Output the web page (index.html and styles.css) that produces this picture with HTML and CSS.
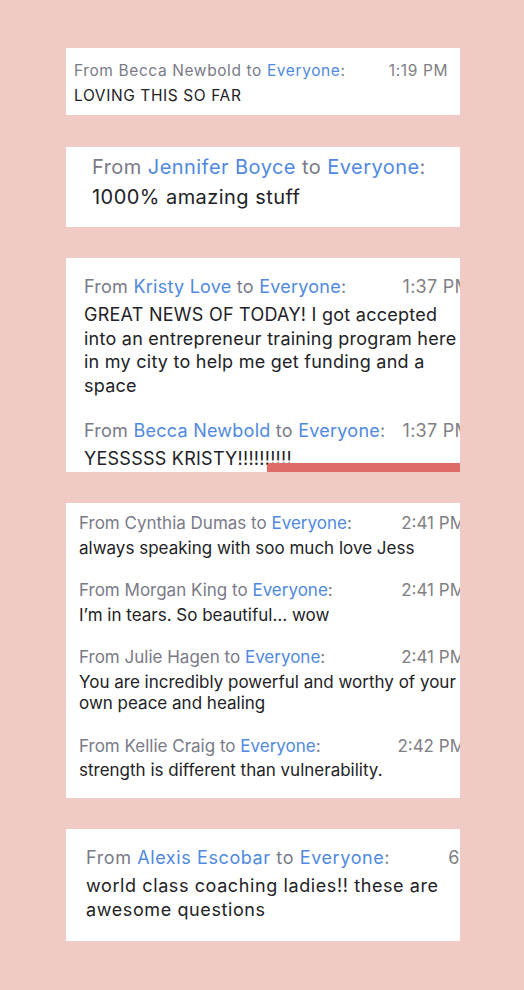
FILE: index.html
```html
<!doctype html>
<html>
<head>
    <title>Chat</title>
    <link rel="stylesheet" href="styles.css">
</head>
<body>
<div class="feed">

    <div class="card c1">
        <div class="pane">
            <div class="msg">
                <div class="head"><span>From Becca Newbold to <b>Everyone</b>:</span><span class="time">1:19 PM</span></div>
                <div class="text">LOVING THIS SO FAR</div>
            </div>
        </div>
    </div>

    <div class="card c2">
        <div class="pane">
            <div class="msg">
                <div class="head"><span>From <b>Jennifer Boyce</b> to <b>Everyone</b>:</span></div>
                <div class="text">1000% amazing stuff</div>
            </div>
        </div>
    </div>

    <div class="card c3">
        <div class="pane">
            <div class="msg">
                <div class="head"><span>From <b>Kristy Love</b> to <b>Everyone</b>:</span><span class="time">1:37 PM</span></div>
                <div class="text">GREAT NEWS OF TODAY! I got accepted<br>into an entrepreneur training program here<br>in my city to help me get funding and a<br>space</div>
            </div>
            <div class="msg">
                <div class="head"><span>From <b>Becca Newbold</b> to <b>Everyone</b>:</span><span class="time">1:37 PM</span></div>
                <div class="text">YESSSSS KRISTY!!!!!!!!!!</div>
            </div>
        </div>
        <div class="bar"></div>
    </div>

    <div class="card c4">
        <div class="pane">
            <div class="msg">
                <div class="head"><span>From Cynthia Dumas to <b>Everyone</b>:</span><span class="time">2:41 PM</span></div>
                <div class="text">always speaking with soo much love Jess</div>
            </div>
            <div class="msg">
                <div class="head"><span>From Morgan King to <b>Everyone</b>:</span><span class="time">2:41 PM</span></div>
                <div class="text">I’m in tears. So beautiful… wow</div>
            </div>
            <div class="msg">
                <div class="head"><span>From Julie Hagen to <b>Everyone</b>:</span><span class="time">2:41 PM</span></div>
                <div class="text">You are incredibly powerful and worthy of your<br>own peace and healing</div>
            </div>
            <div class="msg">
                <div class="head"><span>From Kellie Craig to <b>Everyone</b>:</span><span class="time">2:42 PM</span></div>
                <div class="text">strength is different than vulnerability.</div>
            </div>
        </div>
    </div>

    <div class="card c5">
        <div class="pane">
            <div class="msg">
                <div class="head"><span>From <b>Alexis Escobar</b> to <b>Everyone</b>:</span><span class="time">6:02 PM</span></div>
                <div class="text">world class coaching ladies!! these are<br>awesome questions</div>
            </div>
        </div>
    </div>

</div>
</body>
</html>
```

FILE: styles.css
```css
body {
    margin: 0;
    background-color: #f0cbc5;
    font-family: Inter, "Noto Sans", sans-serif;
}
.feed {
    display: flex;
    flex-direction: column;
    gap: 31px;
    padding: 48px 0 0 66px;
}
.card {
    position: relative;
    width: 394px;
    background-color: white;
    overflow: hidden;
}
.pane {
    display: flex;
    flex-direction: column;
}
.head {
    display: flex;
    justify-content: space-between;
    color: #7a7a88;
    white-space: nowrap;
}
.head b {
    font-weight: normal;
    color: #4f89e0;
}
.time {
    color: #808084;
}
.text {
    color: #222226;
    white-space: nowrap;
}
.bar {
    position: absolute;
    left: 201px;
    right: 0;
    bottom: 0;
    height: 9px;
    background-color: #df6b68;
    border-top-left-radius: 3px;
}

/* card sizes */
.c1 {
    font-size: 15.5px;
    line-height: 25px;
    letter-spacing: 0.6px;
}
.c1 .pane {
    padding: 10px 12px 7px 8px;
}

.c2 {
    margin-top: 1px;
    font-size: 20px;
    line-height: 30px;
    letter-spacing: 0.45px;
}
.c2 .pane {
    padding: 5px 0 15px 26px;
}

.c3 {
    font-size: 18px;
    line-height: 23.5px;
    letter-spacing: 0.25px;
}
.c3 .pane {
    width: 387px;
    padding: 17px 0 2px 18px;
    gap: 21.5px;
}
.c3 .head {
    margin-bottom: 4.5px;
}

.c4 {
    font-size: 17px;
    line-height: 21.5px;
}
.c4 .pane {
    width: 386px;
    padding: 10px 0 16.5px 13px;
    gap: 21px;
}
.c4 .head {
    margin-bottom: 3px;
}

.c5 {
    font-size: 18px;
    line-height: 24px;
    letter-spacing: 0.6px;
}
.c5 .pane {
    width: 438px;
    padding: 17px 0 19px 20px;
}
.c5 .head {
    margin-bottom: 3.6px;
}
```
